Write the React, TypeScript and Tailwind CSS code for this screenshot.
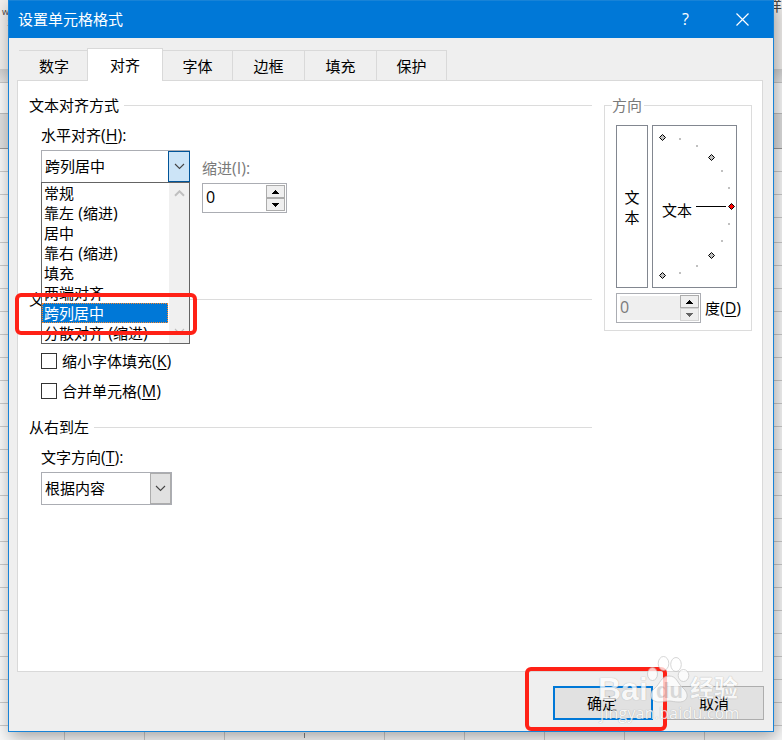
import { useState } from 'react';
import type { ReactNode } from 'react';

const tabs = [
  { label: '数字', width: 'w-[68px]' },
  { label: '对齐', width: 'w-[76px]' },
  { label: '字体', width: 'w-[70px]' },
  { label: '边框', width: 'w-[72px]' },
  { label: '填充', width: 'w-[72px]' },
  { label: '保护', width: 'w-[70px]' },
];

const options = ['常规', '靠左 (缩进)', '居中', '靠右 (缩进)', '填充', '两端对齐', '跨列居中', '分散对齐 (缩进)'];

const dots = [
  [27, 13], [44, 20], [69, 45], [76, 62],
  [76, 98], [69, 115], [44, 140], [27, 147],
];

const handles = [
  [9.5, 11.5], [58.5, 31.5], [58.5, 129.5], [9.5, 149.5],
];

// Sheet rows and columns that show around the dialog
function Sheet() {
  const rows = [23, 23, 23, 25, ...Array(21).fill(23)];
  return (
    <div className="flex h-full flex-col">
      <div className="relative h-[69px] shrink-0 bg-[#f1efed] text-[#444]">
        <span className="absolute left-[2px] top-[5px] text-[9px] leading-[13px]">w</span>
        <span className="absolute left-[7px] top-[19px] text-[8px] leading-[8px] text-[#999]">二</span>
        <span className="absolute left-[767px] top-[-4px] text-[15px] leading-[18px]">样</span>
      </div>
      <div className="h-[14px] shrink-0 border-b border-[#c6c6c6] bg-gradient-to-b from-[#cfcfcf] to-[#e4e4e4]" />
      <div className="h-[31px] shrink-0 border-b border-[#bdbdbd] bg-[#fafafa]" />
      <div className="h-[35px] shrink-0 border-b border-[#999] bg-[#dfdfdf]" />
      {rows.map((h, i) => (
        <div key={i} className="shrink-0 border-b border-[#cacaca]" style={{ height: h }} />
      ))}
      <div className="flex h-[14px] shrink-0">
        <div className="w-[65px] shrink-0 border-r border-[#cacaca]" />
        <div className="w-[80px] shrink-0 border-r border-[#cacaca]" />
        <div className="w-[80px] shrink-0 border-r border-[#cacaca]" />
        <div className="mt-[7px] h-[5px] w-[80px] shrink-0 border-r border-[#808080]" />
        {[0, 1, 2, 3, 4].map(i => (
          <div key={i} className="w-[80px] shrink-0 border-r border-[#cacaca]" />
        ))}
      </div>
    </div>
  );
}

// Latin letters and punctuation sit one pixel larger than the Chinese text
function Latin({ children }: { children: ReactNode }) {
  return <span className="text-[16px] leading-none">{children}</span>;
}

function Hotkey({ label, letter, colon }: { label: string; letter: string; colon?: boolean }) {
  return (
    <>
      {label}
      <Latin>(<u className="decoration-1 underline-offset-2">{letter}</u>){colon && ':'}</Latin>
    </>
  );
}

function Chevron({ up, color }: { up?: boolean; color: string }) {
  return (
    <svg width="11" height="7" viewBox="0 0 11 7" fill="none" stroke={color} strokeWidth={up ? 2 : 1.1}>
      <path d={up ? 'M1 5.8 5.5 1.3 10 5.8' : 'M1 1 5.5 5.5 10 1'} />
    </svg>
  );
}

function Spinner({ value, disabled }: { value: string; disabled?: boolean }) {
  return (
    <div className="flex h-[30px] w-[85px] border border-[#abadb3] bg-white p-px text-[16px]">
      <div className={disabled ? 'mb-px ml-[2px] mt-px flex-1 bg-[#efefef] leading-[22px] text-[#7a7a7a]' : 'flex-1 pl-[2px] leading-[24px]'}>
        {value}
      </div>
      <div className="flex w-[19px] flex-col">
        <div className="flex h-[13px] items-center justify-center border border-[#acacac] bg-[#efefef]">
          <svg width="7" height="4" viewBox="0 0 7 4" shapeRendering="crispEdges"><path d="M3 0h1v1h1v1h1v1h1v1H0V3h1V2h1V1h1z" /></svg>
        </div>
        <div className={`flex h-[13px] items-center justify-center border bg-[#efefef] ${disabled ? 'border-[#d4d4d4]' : 'border-[#acacac]'}`}>
          <svg width="7" height="4" viewBox="0 0 7 4" shapeRendering="crispEdges"><path d="M0 0h7v1H6v1H5v1H4v1H3V3H2V2H1V1H0z" fill={disabled ? '#666' : '#000'} /></svg>
        </div>
      </div>
    </div>
  );
}

function GroupTitle({ children }: { children: ReactNode }) {
  return (
    <div className="flex h-5 items-center gap-[5px]">
      <span className="shrink-0">{children}</span>
      <span className="h-px flex-1 bg-[#dcdcdc]" />
    </div>
  );
}

function Check({ label, hotkey }: { label: string; hotkey: string }) {
  return (
    <label className="flex h-5 items-center">
      <span className="mr-[5px] h-4 w-4 border border-[#333] bg-white" />
      <span><Hotkey label={label} letter={hotkey} /></span>
    </label>
  );
}

function Dropdown() {
  return (
    <div className="absolute left-0 top-[32px] flex w-[149px] border border-[#646464] bg-white">
      <ul className="w-[127px]">
        {options.map(o => {
          const [name, hint] = o.split(' ');
          return (
            <li
              key={o}
              className={
                o === '跨列居中'
                  ? 'mr-px h-5 whitespace-nowrap bg-[#0078d7] pl-[2px] leading-5 text-white outline-dotted outline-1 -outline-offset-1 outline-[#ff8728]'
                  : 'h-5 whitespace-nowrap pl-[2px] leading-5'
              }
            >
              {name}
              {hint && (
                <>
                  <Latin>{' ('}</Latin>
                  {hint.slice(1, -1)}
                  <Latin>)</Latin>
                </>
              )}
            </li>
          );
        })}
      </ul>
      <div className="flex flex-1 flex-col items-center justify-between bg-[#f0f0f0] pb-[8px] pt-[7px]">
        <Chevron up color="#bfbfbf" />
        <Chevron color="#bfbfbf" />
      </div>
    </div>
  );
}

function Dial() {
  return (
    <svg width="83" height="161" viewBox="0 0 83 161" className="overflow-visible">
      {dots.map(([x, y]) => (
        <rect key={`${x}-${y}`} x={x - 1} y={y - 1} width="2" height="2" fill="#c0c0c0" />
      ))}
      {handles.map(([x, y]) => (
        <path key={`${x}-${y}`} d={`M${x - 3} ${y}l3-3 3 3-3 3z`} fill="#c0c0c0" stroke="#000" />
      ))}
      <rect x="43" y="80" width="30" height="1" />
      <path d="M75.5 80.5l3-3 3 3-3 3z" fill="#f00" stroke="#000" />
    </svg>
  );
}

function Watermark() {
  return (
    <div className="pointer-events-none absolute left-[600px] top-[654px] h-[70px] w-[142px] text-white opacity-75 [text-shadow:0_0_1px_#888]">
      <svg className="absolute left-[46px] top-0" width="46" height="50" viewBox="0 0 46 50" fill="#fff" stroke="#bbb" strokeWidth="0.8">
        <ellipse cx="6.5" cy="20" rx="5" ry="6.5" />
        <ellipse cx="17.5" cy="9.5" rx="5.3" ry="7" />
        <ellipse cx="30" cy="10.5" rx="5.3" ry="7" />
        <ellipse cx="37.5" cy="21.5" rx="5.3" ry="6" />
        <path d="M23 22C15 22 14 30 9 34C1 40 5 48 13 48C18 48 20 47 23 47C26 47 28 48 33 48C43 48 43 39 37 34C31 29 31 22 23 22Z" />
      </svg>
      <span className="absolute left-[-2px] top-[18px] font-['Liberation_Sans',sans-serif] text-[32px] font-bold leading-[34px]">Bai</span>
      <span className="absolute left-[56px] top-[24px] font-['Liberation_Sans',sans-serif] text-[22px] font-bold leading-[26px] text-[#d6d6d6] [text-shadow:none]">du</span>
      <span className="absolute left-[90px] top-[19px] text-[24px] font-bold leading-[30px]">经验</span>
      <span className="absolute left-0 top-[49px] text-[16px] leading-[20px] tracking-[0.2px]">jingyan.baidu.com</span>
    </div>
  );
}

export default function App() {
  const [active, setActive] = useState('对齐');

  return (
    <div className="relative h-[740px] w-[782px] overflow-hidden bg-[#f9f9f9] font-['Open_Sans','Noto_Sans_CJK_SC',sans-serif] text-[15px] leading-5 text-black">
      <Sheet />

      <div className="absolute left-[8px] top-0 isolate flex h-[732px] w-[766px] flex-col border border-[#1883d7] bg-[#efefef] shadow-[2px_5px_16px_rgba(0,0,0,0.35)]">
        <header className="flex h-[37px] items-center bg-[#0078d7] pb-px pl-[9px] text-white">
          <h1>设置单元格格式</h1>
          <span className="ml-auto mr-[47px] text-[16px]">?</span>
          <svg className="mr-[24px]" width="13" height="13" viewBox="0 0 13 13" stroke="#fff" strokeWidth="1.2">
            <path d="M.5.5l12 12M12.5.5l-12 12" />
          </svg>
        </header>

        <nav className="z-10 -mb-px ml-[10px] mt-[10px] flex items-end">
          {tabs.map(t => (
            <button
              key={t.label}
              onClick={() => setActive(t.label)}
              className={
                t.label === active
                  ? `${t.width} h-[33px] border border-b-0 border-[#d9d9d9] bg-white pb-[1px]`
                  : `${t.width} h-[31px] border-b border-t border-[#d9d9d9] ${t.label === '数字' ? 'pl-[2px]' : 'border-r'}`
              }
            >
              {t.label}
            </button>
          ))}
        </nav>

        <main className="ml-[8px] flex h-[592px] w-[746px] border border-[#d9d9d9] bg-white pl-[11px] pt-[14px]">
          <section className="w-[563px]">
            <GroupTitle>文本对齐方式</GroupTitle>
            <div className="ml-[12px] mt-[10px] flex h-[164px]">
              <div className="w-[149px]">
                <div className="h-5"><Hotkey label="水平对齐" letter="H" colon /></div>
                <div className="relative mt-[5px] flex h-[33px] border border-[#abadb3] bg-white">
                  <span className="flex-1 pl-[3px] leading-[31px]">跨列居中</span>
                  <span className="-mr-px flex w-[22px] items-center justify-center border border-[#005499] bg-[#cce4f7]">
                    <Chevron color="#444" />
                  </span>
                  <div className="absolute -left-px -top-px z-10">
                    <Dropdown />
                  </div>
                </div>
              </div>
              <div className="ml-[12px] mt-[33px]">
                <div className="mb-[5px] h-5 text-[#7a7a7a]">缩进<Latin>(I):</Latin></div>
                <Spinner value="0" />
              </div>
            </div>

            <GroupTitle>文本控制</GroupTitle>
            <div className="ml-[12px] mt-[42px] flex flex-col gap-[10px]">
              <Check label="缩小字体填充" hotkey="K" />
              <Check label="合并单元格" hotkey="M" />
            </div>

            <div className="mt-[16px]">
              <GroupTitle>从右到左</GroupTitle>
            </div>
            <div className="ml-[12px] mt-[10px] w-[131px]">
              <div className="h-5"><Hotkey label="文字方向" letter="T" colon /></div>
              <div className="mt-[5px] flex h-[33px] border border-[#abadb3]">
                <span className="flex-1 pl-[3px] leading-[31px]">根据内容</span>
                <span className="flex w-[21px] items-center justify-center border border-[#acacac] bg-[#e1e1e1]">
                  <Chevron color="#444" />
                </span>
              </div>
            </div>
          </section>

          <section className="ml-[12px] mt-[10px] h-[226px] w-[148px] border border-[#dcdcdc] pl-[11px]">
            <div className="-ml-[4px] -mt-[11px] h-5 w-[32px] bg-white text-[#7a7a7a]">方向</div>
            <div className="mt-[10px] flex gap-[4px]">
              <div className="flex h-[163px] w-[32px] flex-col items-center justify-center border border-[#828790]">
                <span>文</span>
                <span>本</span>
              </div>
              <div className="relative h-[163px] w-[85px] border border-[#828790]">
                <Dial />
                <span className="absolute left-[9px] top-[74px]">文本</span>
              </div>
            </div>
            <div className="mt-[5px] flex items-center gap-[4px]">
              <Spinner value="0" disabled />
              <span className="h-5"><Hotkey label="度" letter="D" /></span>
            </div>
          </section>
        </main>

        <footer className="mr-[9px] mt-[14px] flex justify-end gap-[11px]">
          <button className="h-[34px] w-[100px] border-2 border-[#0078d7] bg-[#e1e1e1] pr-[2px]">确定</button>
          <button className="h-[34px] w-[100px] border border-[#adadad] bg-[#e1e1e1]">取消</button>
        </footer>
      </div>

      {/* Red callouts */}
      <div className="absolute left-[15px] top-[293px] h-[42px] w-[182px] rounded-[6px] border-4 border-[#ff2116]" />
      <div className="absolute left-[525px] top-[667px] h-[64px] w-[142px] rounded-[6px] border-4 border-[#ff2116]" />

      <Watermark />
    </div>
  );
}
